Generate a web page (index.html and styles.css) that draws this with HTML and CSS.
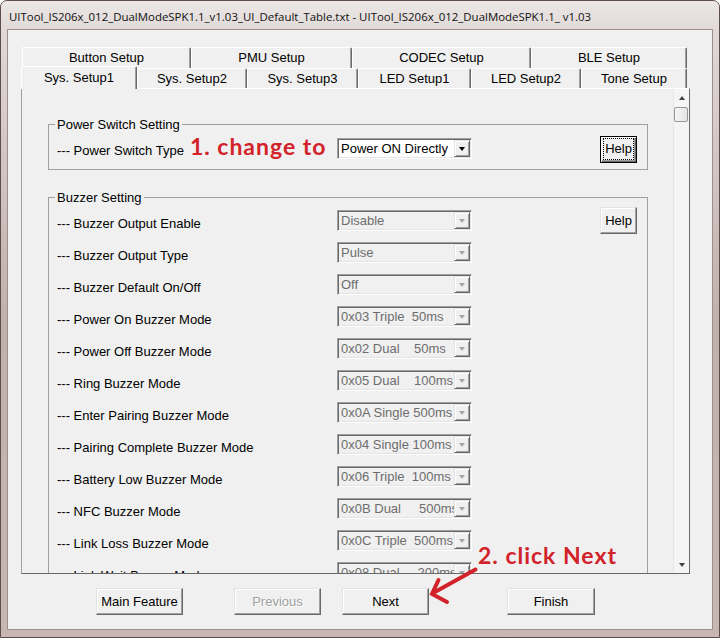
FILE: index.html
```html
<!DOCTYPE html>
<html>
<head>
<meta charset="utf-8">
<link rel="stylesheet" href="styles.css">
</head>
<body>
<div class="window">
  <div class="titlebar"><span class="title">UITool_IS206x_012_DualModeSPK1.1_v1.03_UI_Default_Table.txt - UITool_IS206x_012_DualModeSPK1.1_ v1.03</span></div>
  <div class="client">
    <div class="tabs">
      <div class="tabrow back">
        <div class="tab t-button">Button Setup</div>
        <div class="tab t-pmu">PMU Setup</div>
        <div class="tab t-codec">CODEC Setup</div>
        <div class="tab t-ble">BLE Setup</div>
      </div>
      <div class="tabrow front">
        <div class="tab sel t-sys1">Sys. Setup1</div>
        <div class="tab t-sys2">Sys. Setup2</div>
        <div class="tab t-sys3">Sys. Setup3</div>
        <div class="tab t-led1">LED Setup1</div>
        <div class="tab t-led2">LED Setup2</div>
        <div class="tab t-tone">Tone Setup</div>
      </div>
    </div>
    <div class="panel">
      <div class="scroll">
        <fieldset class="group g-power">
          <legend>Power Switch Setting</legend>
          <div class="row">
            <div class="label">--- Power Switch Type<span class="note note-change">1. change to</span></div>
            <div class="combo on"><span class="val">Power ON Directly</span><span class="arr"><i class="tri"></i></span></div>
            <div class="btn help default"><span class="focus">Help</span></div>
          </div>
        </fieldset>
        <fieldset class="group g-buzzer">
          <legend>Buzzer Setting</legend>
          <div class="row">
            <div class="label">--- Buzzer Output Enable</div>
            <div class="combo"><span class="val">Disable</span><span class="arr"><i class="tri"></i></span></div>
            <div class="btn help">Help</div>
          </div>
          <div class="row">
            <div class="label">--- Buzzer Output Type</div>
            <div class="combo"><span class="val">Pulse</span><span class="arr"><i class="tri"></i></span></div>
          </div>
          <div class="row">
            <div class="label">--- Buzzer Default On/Off</div>
            <div class="combo"><span class="val">Off</span><span class="arr"><i class="tri"></i></span></div>
          </div>
          <div class="row">
            <div class="label">--- Power On Buzzer Mode</div>
            <div class="combo"><span class="val">0x03 Triple  50ms</span><span class="arr"><i class="tri"></i></span></div>
          </div>
          <div class="row">
            <div class="label">--- Power Off Buzzer Mode</div>
            <div class="combo"><span class="val">0x02 Dual    50ms</span><span class="arr"><i class="tri"></i></span></div>
          </div>
          <div class="row">
            <div class="label">--- Ring Buzzer Mode</div>
            <div class="combo"><span class="val">0x05 Dual    100ms</span><span class="arr"><i class="tri"></i></span></div>
          </div>
          <div class="row">
            <div class="label">--- Enter Pairing Buzzer Mode</div>
            <div class="combo"><span class="val">0x0A Single 500ms</span><span class="arr"><i class="tri"></i></span></div>
          </div>
          <div class="row">
            <div class="label">--- Pairing Complete Buzzer Mode</div>
            <div class="combo"><span class="val">0x04 Single 100ms</span><span class="arr"><i class="tri"></i></span></div>
          </div>
          <div class="row">
            <div class="label">--- Battery Low Buzzer Mode</div>
            <div class="combo"><span class="val">0x06 Triple  100ms</span><span class="arr"><i class="tri"></i></span></div>
          </div>
          <div class="row">
            <div class="label">--- NFC Buzzer Mode</div>
            <div class="combo"><span class="val">0x0B Dual     500ms</span><span class="arr"><i class="tri"></i></span></div>
          </div>
          <div class="row">
            <div class="label">--- Link Loss Buzzer Mode</div>
            <div class="combo"><span class="val">0x0C Triple  500ms</span><span class="arr"><i class="tri"></i></span></div>
          </div>
          <div class="row">
            <div class="label">--- Link Wait Buzzer Mode</div>
            <div class="combo"><span class="val">0x08 Dual     200ms</span><span class="arr"><i class="tri"></i></span></div>
          </div>
          <div class="row">
            <div class="label">--- Link Back Buzzer Mode</div>
            <div class="combo"><span class="val">0x07 Single 100ms</span><span class="arr"><i class="tri"></i></span></div>
          </div>
        </fieldset>
      </div>
      <div class="scrollbar">
        <div class="sb-btn"><i class="sb-up"></i></div>
        <div class="sb-thumb"></div>
        <div class="sb-track"></div>
        <div class="sb-btn"><i class="sb-down"></i></div>
      </div>
    </div>
    <div class="buttons">
      <div class="btn">Main Feature</div>
      <div class="btn btn-prev">Previous</div>
      <div class="btn btn-next">Next</div>
      <div class="btn btn-finish">Finish</div>
    </div>
  </div>
  <div class="note note-next">2. click Next</div>
  <svg class="arrow" width="720" height="638" viewBox="0 0 720 638">
    <path d="M475.5 569.5 L434 592.5" fill="none" stroke="#d2232a" stroke-width="4" stroke-linecap="round"/>
    <path d="M438.5 580 L432 594 L447 602" fill="none" stroke="#d2232a" stroke-width="4" stroke-linecap="round" stroke-linejoin="miter"/>
  </svg>
</div>
</body>
</html>
```

FILE: styles.css
```css
html, body {
  margin: 0;
  padding: 0;
  background: #ffffff;
}

.window {
  position: relative;
  width: 720px;
  height: 638px;
  box-sizing: border-box;
  border: 1px solid #5e4e4b;
  border-radius: 7px 7px 0 0;
  padding: 0 6px 7px;
  background: linear-gradient(to bottom, #e4dedc 0px, #d6cbc8 120px, #c2b0ac 320px, #c8b6b2 638px);
  font-family: "Liberation Sans", Arial, sans-serif;
  font-size: 13px;
  color: #000;
  overflow: hidden;
}

.titlebar {
  height: 28px;
  margin: 0 -6px;
  padding-left: 8px;
  display: flex;
  align-items: center;
  border-radius: 6px 6px 0 0;
  background: linear-gradient(to bottom, #ece8e7, #e0d9d7);
}

.title {
  font-family: "Open Sans", "Noto Sans", sans-serif;
  font-size: 11.45px;
  color: #111;
  white-space: nowrap;
  padding-top: 2px;
}

.client {
  height: 599px;
  border: 1px solid #9d8f8c;
  background: #f0f0f0;
  display: flex;
  flex-direction: column;
}

/* tabs */
.tabs {
  margin-top: 17px;
}

.tabrow {
  display: flex;
}

.tabrow.back {
  margin-left: 14px;
  height: 21px;
}

.tabrow.front {
  margin-left: 13px;
  height: 20px;
  align-items: flex-start;
}

.tab {
  box-sizing: border-box;
  height: 100%;
  display: flex;
  align-items: center;
  justify-content: center;
  border-top: 1px solid #ffffff;
  border-left: 1px solid #ffffff;
  border-right: 1px solid #696969;
  box-shadow: inset -1px 0 0 #a0a0a0;
  border-radius: 2px 2px 0 0;
  background: #f0f0f0;
  white-space: nowrap;
}

.tabrow.back .tab {
  padding-bottom: 1px;
}

.tab.sel {
  height: 23px;
  margin-top: -2px;
  position: relative;
  z-index: 1;
  padding-bottom: 2px;
}

.t-button { width: 169px; }
.t-pmu { width: 161px; }
.t-codec { width: 179px; }
.t-ble { width: 156px; }
.t-sys1 { width: 116px; }
.t-sys2 { width: 110px; }
.t-sys3 { width: 111px; }
.t-led1 { width: 113px; }
.t-led2 { width: 110px; }
.t-tone { width: 106px; }

/* panel */
.panel {
  margin-left: 13px;
  width: 669px;
  height: 486px;
  box-sizing: border-box;
  border: 1px solid;
  border-color: #ffffff #696969 #696969 #a0a0a0;
  display: flex;
}

.scroll {
  flex: 1;
  overflow: hidden;
  padding: 28px 0 0 26px;
}

.group {
  margin: 0;
  width: 600px;
  box-sizing: border-box;
  border: 1px solid #a0a0a0;
  padding: 0 10px 0 8px;
  min-inline-size: 0;
}

.group legend {
  padding: 0 2px;
  margin-left: -2px;
  line-height: 15px;
  font-size: 13px;
}

.g-power {
  padding-top: 4px;
  padding-bottom: 5px;
}

.g-buzzer {
  margin-top: 20px;
}

.row {
  display: flex;
  align-items: flex-start;
}

.g-power .row { height: 28px; }
.g-buzzer .row { height: 32px; }

.label {
  width: 280px;
  flex: none;
  display: flex;
  align-items: flex-start;
  white-space: nowrap;
  line-height: 15px;
}

.g-power .label { margin-top: 7px; }
.g-buzzer .label { margin-top: 11px; }

.note {
  font-family: Lato, "Open Sans", sans-serif;
  font-weight: 700;
  font-size: 23px;
  line-height: 23px;
  letter-spacing: 1px;
  color: #d2232a;
  white-space: nowrap;
}

.note-change {
  margin-left: 6px;
  margin-top: -8px;
}

.note-next {
  position: absolute;
  left: 477px;
  top: 543px;
}

.arrow {
  position: absolute;
  left: -1px;
  top: -1px;
  pointer-events: none;
}

/* combo box */
.combo {
  flex: none;
  width: 135px;
  height: 21px;
  box-sizing: border-box;
  border: 1px solid;
  border-color: #a0a0a0 #ffffff #ffffff #a0a0a0;
  box-shadow: inset 1px 1px 0 #696969, inset -1px -1px 0 #e3e3e3;
  display: flex;
  background: #f0f0f0;
  color: #6d6d6d;
}

.combo.on {
  background: #ffffff;
  color: #000;
}

.g-power .combo { margin-top: 2px; }
.g-buzzer .combo { margin-top: 5px; }

.combo .val {
  flex: 1;
  min-width: 0;
  padding-left: 3px;
  overflow: hidden;
  white-space: pre;
  line-height: 19px;
}

.combo .arr {
  flex: none;
  width: 16px;
  margin: 1px 1px 1px 0;
  box-sizing: border-box;
  border: 1px solid;
  border-color: #e3e3e3 #696969 #696969 #e3e3e3;
  box-shadow: inset 1px 1px 0 #ffffff, inset -1px -1px 0 #a0a0a0;
  background: #f0f0f0;
  display: flex;
  align-items: center;
  justify-content: center;
}

.tri {
  width: 0;
  height: 0;
  border-left: 3px solid transparent;
  border-right: 3px solid transparent;
  border-top: 4px solid #a6a6a6;
}

.combo.on .tri {
  border-top-color: #000;
}

/* buttons */
.btn {
  flex: none;
  box-sizing: border-box;
  height: 27px;
  width: 87px;
  border: 1px solid;
  border-color: #e3e3e3 #696969 #696969 #e3e3e3;
  box-shadow: inset -1px -1px 0 #a0a0a0, inset 1px 1px 0 #ffffff;
  background: #f0f0f0;
  display: flex;
  align-items: center;
  justify-content: center;
  white-space: nowrap;
}

.help {
  width: 37px;
  margin-left: 128px;
}

.g-power .help { margin-top: 0px; }
.g-buzzer .help { margin-top: 2px; }

.help.default {
  border-color: #000;
  box-shadow: inset 1px 1px 0 #ffffff, inset -1px -1px 0 #696969, inset -2px -2px 0 #a0a0a0;
  padding: 1px 2px 2px 2px;
  align-items: stretch;
}

.focus {
  flex: 1;
  border: 1px dotted #000;
  display: flex;
  align-items: center;
  justify-content: center;
  padding-bottom: 1px;
}

.buttons {
  display: flex;
  margin-top: 14px;
  padding-left: 88px;
  height: 27px;
}

.btn-prev {
  margin-left: 51px;
  color: #a0a0a0;
  text-shadow: 1px 1px 0 #ffffff;
}

.btn-next { margin-left: 21px; }

.btn-finish {
  margin-left: 78px;
  width: 88px;
}

/* scrollbar */
.scrollbar {
  flex: none;
  width: 16px;
  box-sizing: border-box;
  border-left: 1px solid #e6e6e6;
  background: #f5f5f5;
  display: flex;
  flex-direction: column;
}

.sb-btn {
  height: 17px;
  flex: none;
  display: flex;
  align-items: center;
  justify-content: center;
}

.sb-up {
  width: 0;
  height: 0;
  border-left: 3px solid transparent;
  border-right: 3px solid transparent;
  border-bottom: 4px solid #404040;
}

.sb-down {
  width: 0;
  height: 0;
  border-left: 3px solid transparent;
  border-right: 3px solid transparent;
  border-top: 4px solid #404040;
}

.sb-thumb {
  flex: none;
  height: 15px;
  width: 14px;
  margin-top: 1px;
  box-sizing: border-box;
  border: 1px solid #979797;
  border-radius: 2px;
  background: linear-gradient(to right, #f6f6f6, #e4e4e4);
}

.sb-track {
  flex: 1;
}
```
